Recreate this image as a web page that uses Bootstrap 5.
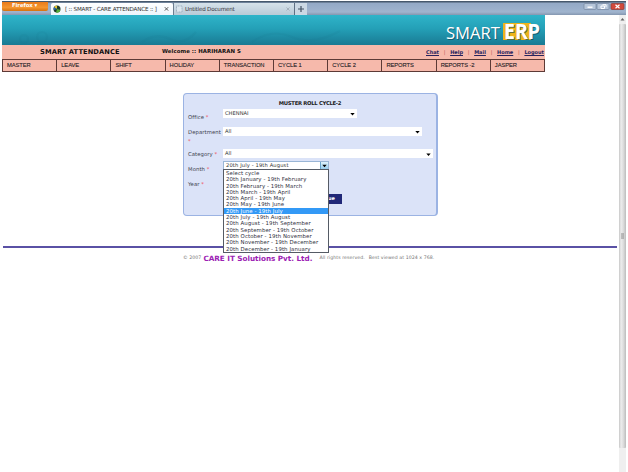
<!DOCTYPE html>
<html lang="en">
<head>
<meta charset="utf-8">
<title>[ :: SMART - CARE ATTENDANCE :: ]</title>
<link href="https://cdn.jsdelivr.net/npm/bootstrap@5.3.0/dist/css/bootstrap.min.css" rel="stylesheet">
<style>
html,body{height:472px;overflow:hidden}
body{font:5.4px/1.2 "DejaVu Sans",sans-serif;color:#333;background:#fff;white-space:nowrap}
svg{display:block;flex:none}
.window{width:626px;height:472px;padding:1px 0 0 2px}
.tabstrip{height:14px;background:linear-gradient(#46586c 0,#46586c 1px,#93a9c6 2px,#a0b4ce 11px,#8497b0);font:5.6px/12px "DejaVu Sans",sans-serif}
.fox{width:46px;height:9px;margin-top:1px;background:linear-gradient(#e87a1b,#f5962f 60%,#d5720e);color:#fff;font:bold 5.4px/7px "DejaVu Sans",sans-serif;border-radius:0 0 2px 2px;padding-left:10px;letter-spacing:-.1px}
.tab-on{width:122px;height:12px;margin:2px 0 0 3px;background:linear-gradient(#fff,#edf4fb);padding-left:2px;border-radius:2px 2px 0 0;letter-spacing:-.19px}
.tab-off{width:122px;height:12px;margin-top:2px;background:linear-gradient(#d6e2ea,#bacad7);border-left:1px solid #6c7d90;border-right:1px solid #5f7084;padding-left:2px;color:#3a3540;letter-spacing:-.2px}
.tab-add{width:12px;height:12px;margin-top:2px;background:#cbd8e4}
.page-col{width:617px}
.app{width:543px}
.banner{height:30px;background:linear-gradient(#2fb4c9,#24a0b7 45%,#197a93)}
.pink{background:#f6b9ab}
.strip{height:14px;color:#111}
.app-name{width:160px;padding-left:38px;font-size:6.7px;font-weight:700;line-height:14px;letter-spacing:.08px}
.welcome{font-size:5.4px;font-weight:700;line-height:13px;letter-spacing:.06px}
.links{width:118px;margin-right:1px;font-size:5px;font-weight:700;line-height:14px;color:#b0504c}
.links span{font-weight:400}
.links a,.links a:hover{color:#26235e;text-decoration:underline;text-decoration-thickness:.6px}
.menu{height:13px;width:543px;border:1px solid #5d3a36;border-right:0;font:5.8px/11px "Liberation Sans",sans-serif;color:#252025;letter-spacing:-.08px}
.menu div{flex:1 1 0;border-right:1px solid #5d3a36;padding-left:4px;-webkit-text-stroke:.1px #252025}
.panel{width:255px;height:123px;margin:21px 0 0 181px;background:#dbe3f8;border:1px solid #9bb3e3;border-width:1px 2px 1px 1px;border-radius:4px}
.panel-title{font:bold 5.3px/8px "DejaVu Sans",sans-serif;padding-top:5px;color:#222;letter-spacing:-.3px}
.lines{padding:2px 0 0 4px}
.field{align-items:flex-start}
.field>span{width:35px;flex:none;padding-top:4px;color:#3b3f4d;font-size:5.3px;line-height:9px;letter-spacing:.08px}
.field .up{padding-top:1px}
.field i{color:#f0505a;font-style:normal}
.sel{height:9px;background:#fff;padding:0 2px;font-size:5.2px;line-height:9px;color:#333;position:relative}
.sel svg{margin-top:1px}
.month{width:106px;border:1px solid #9ab6d6;border-bottom-color:#6c93bd;padding:0 0 0 2px;line-height:6px;letter-spacing:.12px}
.drop{width:8px;height:7px;background:linear-gradient(#dff3fd,#98cdec);border-left:1px solid #6aa5cc}
.opts{position:absolute;left:-1px;top:7px;width:106px;height:84px;background:#fff;border:1px solid #555b65;z-index:3;font-size:5.4px;line-height:6.3px;color:#303040;letter-spacing:.09px}
.opts div{padding-left:2px;height:6.3px}
.opts .on{background:#3399f6;color:#fff}
.submit{width:56px;height:10px;margin:0 0 0 98px;background:#202878;color:#fff;font-weight:700;font-size:5px;line-height:9px;padding-right:7px}
.rule{height:2px;background:#5a51a5;margin:30px 2px 0 1px}
.foot{padding-left:181px;margin-top:4px;color:#777;font-size:4.7px;height:12px;letter-spacing:.05px}
.foot b{font-size:7.25px;color:#9c22b4;line-height:11px;letter-spacing:-.03px;margin:0 7px 0 2px}
.scroll{width:7px;background:#efefef}
.thumb{height:424px;background:linear-gradient(90deg,#c7c7c7,#ececec 30%,#dedede 60%,#bcbcbc);border-radius:1px}
</style>
</head>
<body>
<div class="window d-flex flex-column">
  <header class="tabstrip d-flex">
    <div class="fox">Firefox ▾</div>
    <div class="tab-on d-flex">
      <svg width="8" height="12" viewBox="0 0 8 12"><circle cx="4" cy="6" r="3.5" fill="#203b28"/><path d="M4 6V2.5A3.5 3.5 0 0 0 1 4.3z" fill="#e8c62e"/><path d="M4 6l3.4 1A3.5 3.5 0 0 1 3 9.4z" fill="#56ae38"/><path d="M4 6l-3.3 1A3.5 3.5 0 0 1 1 4.3z" fill="#2f6fb0"/></svg>
      <span class="ms-1 ps-0">[ :: SMART - CARE ATTENDANCE :: ]</span>
      <svg class="ms-auto me-1" width="5" height="12" viewBox="0 0 5 12"><path d="M.8 4.200l3.400 3.400M4.200 4.200L.8 7.600" stroke="#555" fill="none"/></svg>
    </div>
    <div class="tab-off d-flex">
      <svg width="9" height="12" viewBox="0 0 9 12"><rect x=".5" y="3" width="5.500" height="6" fill="#dce6ee" stroke="#8d9fb0" stroke-width=".7" stroke-dasharray="1 .5"/></svg>
      <span>Untitled Document</span>
      <svg class="ms-auto me-1" width="4" height="12" viewBox="0 0 4 12"><path d="M.5 4.500l3 3M3.500 4.500l-3 3" stroke="#9aa6b2" stroke-width=".8"/></svg>
    </div>
    <div class="tab-add"><svg width="12" height="12" viewBox="0 0 12 12"><path d="M6 3v6M3 6h6" stroke="#445364" stroke-width="1.200"/></svg></div>
    <svg class="ms-auto" width="44" height="12" viewBox="0 0 44 12"><rect x="2" y="2.500" width="12" height="6" rx="1" fill="#b6c6da" stroke="#75879f" stroke-width=".7"/><rect x="15" y="2.500" width="12" height="6" rx="1" fill="#b6c6da" stroke="#75879f" stroke-width=".7"/><rect x="29" y="2.500" width="13" height="6" rx="1" fill="#d2493c" stroke="#8c3c38" stroke-width=".7"/><path d="M5.500 6.200h5" stroke="#fff" stroke-width="1.400"/><path d="M19 5h3.500v2.500H19zM20.500 3.700h3.500v2.500" stroke="#fff" fill="none"/><path d="M33.500 3.800l4 3.400M37.500 3.800l-4 3.400" stroke="#fff" stroke-width="1.200"/></svg>
  </header>
  <div class="d-flex flex-grow-1">
    <main class="page-col">
      <div class="app">
        <div class="banner">
          <svg width="543" height="30" viewBox="0 0 543 30" font-family="'Open Sans', sans-serif">
            <g fill="none" stroke="#126f89" stroke-opacity=".09" stroke-width="2"><circle cx="22" cy="24" r="4"/><circle cx="40" cy="22" r="5"/><path d="M140 27q14-10 28-3t26-7M250 27q20-14 40-5t48-6"/></g>
            <rect x="501" y="8" width="28" height="17" fill="#eeb31c"/>
            <g fill="#0b4658" fill-opacity=".65"><text x="445" y="25" font-size="16.500" textLength="54" lengthAdjust="spacingAndGlyphs">SMART</text><text x="503" y="25" font-size="22" font-weight="700" textLength="36" lengthAdjust="spacingAndGlyphs">ERP</text></g>
            <g fill="#fff"><text x="444" y="24" font-size="16.500" textLength="54" lengthAdjust="spacingAndGlyphs">SMART</text><text x="502" y="24" font-size="22" font-weight="700" textLength="36" lengthAdjust="spacingAndGlyphs">ERP</text></g>
          </svg>
        </div>
        <div class="strip pink d-flex">
          <div class="app-name">SMART ATTENDANCE</div>
          <div class="welcome">Welcome :: HARIHARAN S</div>
          <nav class="links d-flex justify-content-between ms-auto"><a href="#">Chat</a><span>|</span><a href="#">Help</a><span>|</span><a href="#">Mail</a><span>|</span><a href="#">Home</a><span>|</span><a href="#">Logout</a></nav>
        </div>
        <nav class="menu pink d-flex"><div>MASTER</div><div>LEAVE</div><div>SHIFT</div><div>HOLIDAY</div><div>TRANSACTION</div><div>CYCLE 1</div><div>CYCLE 2</div><div>REPORTS</div><div>REPORTS -2</div><div>JASPER</div></nav>
      </div>
      <form class="panel">
        <div class="panel-title text-center">MUSTER ROLL CYCLE-2</div>
        <div class="lines">
          <div class="field d-flex" style="height:18px"><span>Office <i>*</i></span><div class="sel d-flex justify-content-between" style="width:134px">CHENNAI<svg width="5" height="8" viewBox="0 0 5 8"><path d="M.3 3h4.400L2.500 5.500z"/></svg></div></div>
          <div class="field d-flex" style="height:22px"><span class="up">Department<br><i>*</i></span><div class="sel d-flex justify-content-between" style="width:199px">All<svg width="5" height="8" viewBox="0 0 5 8"><path d="M.3 3h4.400L2.500 5.500z"/></svg></div></div>
          <div class="field d-flex" style="height:12px"><span class="up">Category <i>*</i></span><div class="sel d-flex justify-content-between" style="width:210px">All<svg width="5" height="8" viewBox="0 0 5 8"><path d="M.3 3.500h4.400L2.500 6z"/></svg></div></div>
          <div class="field d-flex" style="height:15px"><span>Month <i>*</i></span>
            <div class="sel month d-flex justify-content-between"><span>20th July - 19th August</span><div class="drop"><svg class="m-0" width="7" height="7" viewBox="0 0 7 7"><path d="M1.300 2.800h4.400L3.500 5.200z"/></svg></div>
              <div class="opts"><div>Select cycle</div><div>20th January - 19th February</div><div>20th February - 19th March</div><div>20th March - 19th April</div><div>20th April - 19th May</div><div>20th May - 19th June</div><div class="on">20th June - 19th July</div><div>20th July - 19th August</div><div>20th August - 19th September</div><div>20th September - 19th October</div><div>20th October - 19th November</div><div>20th November - 19th December</div><div>20th December - 19th January</div></div>
            </div>
          </div>
          <div class="field d-flex" style="height:18px"><span>Year <i>*</i></span></div>
          <div class="submit text-end">Continue</div>
        </div>
      </form>
      <div class="rule"></div>
      <footer class="foot d-flex align-items-center"><span>© 2007</span><b>CARE IT Solutions Pvt. Ltd.</b><span>All rights reserved.</span><span class="ms-1">Best viewed at 1024 x 768.</span></footer>
    </main>
    <aside class="scroll">
      <svg width="7" height="9" viewBox="0 0 7 9"><path d="M1.500 5.500l2-2.500 2 2.500z" fill="#666"/></svg>
      <div class="thumb d-flex align-items-center"><svg width="7" height="6" viewBox="0 0 7 6"><path d="M2 1h3M2 3h3M2 5h3" stroke="#777" stroke-width=".8"/></svg></div>
    </aside>
  </div>
</div>
<script src="https://cdn.jsdelivr.net/npm/bootstrap@5.3.0/dist/js/bootstrap.bundle.min.js"></script>
</body>
</html>
